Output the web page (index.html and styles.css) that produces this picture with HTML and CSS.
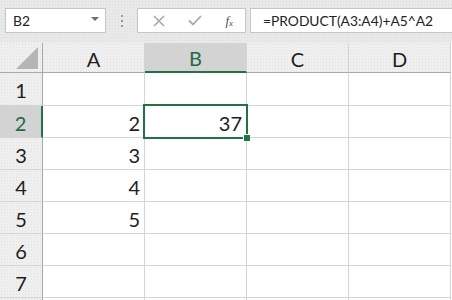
FILE: index.html
```html
<!DOCTYPE html>
<html lang="en">
<head>
    <meta charset="UTF-8">
    <title>Sheet</title>
    <link rel="stylesheet" href="styles.css">
</head>
<body>
    <div class="toolbar">
        <div class="name-box">
            <span>B2</span>
            <svg class="drop" width="8" height="5" viewBox="0 0 8 5"><path d="M0 0H8L4 4Z" fill="#6d6d6d"/></svg>
        </div>
        <div class="grip"><i></i><i></i><i></i></div>
        <div class="fx-buttons">
            <svg width="12" height="12" viewBox="0 0 12 12"><path d="M1 1L11 11M11 1L1 11" stroke="#a9a9a9" stroke-width="1.6"/></svg>
            <svg width="14" height="11" viewBox="0 0 14 11"><path d="M1 5.5L5 9.5L13 1" stroke="#a9a9a9" stroke-width="1.8" fill="none"/></svg>
            <span class="fx">f<sub>x</sub></span>
        </div>
        <div class="formula">=PRODUCT(A3:A4)+A5^A2</div>
    </div>

    <div class="sheet">
        <div class="hdr corner">
            <svg width="23" height="23" viewBox="0 0 23 23"><path d="M22 0V22H0Z" fill="#b5b5b5"/></svg>
        </div>
        <div class="hdr col">A</div>
        <div class="hdr col active-col">B</div>
        <div class="hdr col">C</div>
        <div class="hdr col">D</div>

        <div class="hdr row">1</div>
        <div class="cell"></div><div class="cell"></div><div class="cell"></div><div class="cell"></div>

        <div class="hdr row active-row">2</div>
        <div class="cell">2</div><div class="cell">37</div><div class="cell"></div><div class="cell"></div>

        <div class="hdr row">3</div>
        <div class="cell">3</div><div class="cell"></div><div class="cell"></div><div class="cell"></div>

        <div class="hdr row">4</div>
        <div class="cell">4</div><div class="cell"></div><div class="cell"></div><div class="cell"></div>

        <div class="hdr row">5</div>
        <div class="cell">5</div><div class="cell"></div><div class="cell"></div><div class="cell"></div>

        <div class="hdr row">6</div>
        <div class="cell"></div><div class="cell"></div><div class="cell"></div><div class="cell"></div>

        <div class="hdr row">7</div>
        <div class="cell"></div><div class="cell"></div><div class="cell"></div><div class="cell"></div>

        <!-- row 8 is only a sliver at the bottom edge -->
        <div class="hdr row"></div>
        <div class="cell"></div><div class="cell"></div><div class="cell"></div><div class="cell"></div>

        <div class="selection"><span class="handle"></span></div>
    </div>
</body>
</html>
```

FILE: styles.css
```css
body {
    margin: 0;
    width: 452px;
    height: 300px;
    overflow: hidden;
    background: #fff;
    font-family: Lato, "Liberation Sans", sans-serif;
    color: #1e1e1e;
}

.toolbar {
    height: 43px;
    display: flex;
    align-items: flex-start;
    padding-top: 8px;
    box-sizing: border-box;
    background-color: #e9e9e9;
    background-image: radial-gradient(#dcdcdc 0.6px, transparent 0.8px);
    background-size: 3px 3px;
}
.name-box {
    margin-left: 5px;
    width: 101px;
    height: 25px;
    box-sizing: border-box;
    border: 1px solid #c6c6c6;
    background: #fff;
    display: flex;
    align-items: center;
    justify-content: space-between;
    padding: 0 6px 0 7px;
    font-size: 13.8px;
    color: #222;
}
.drop {
    margin-top: -2px;
}
.grip {
    width: 31px;
    height: 25px;
    display: flex;
    flex-direction: column;
    align-items: center;
    justify-content: center;
    gap: 3px;
}
.grip i {
    width: 2px;
    height: 2px;
    background: #9a9a9a;
}
.fx-buttons {
    width: 109px;
    height: 25px;
    box-sizing: border-box;
    border: 1px solid #c6c6c6;
    background: #fff;
    display: flex;
    align-items: center;
    justify-content: space-between;
    padding: 0 12px 0 15px;
}
.fx {
    font-family: "Liberation Serif", serif;
    font-style: italic;
    font-size: 13px;
    color: #505050;
}
.fx sub {
    font-size: 9px;
    vertical-align: -1px;
}
.formula {
    margin-left: 4px;
    flex: 1;
    height: 25px;
    box-sizing: border-box;
    border: 1px solid #c6c6c6;
    border-right: none;
    background: #fff;
    padding-left: 12px;
    font-size: 13.8px;
    line-height: 23px;
    color: #222;
}

.sheet {
    position: relative;
    display: grid;
    grid-template-columns: 43px 102px 102px 102px 102px;
    grid-template-rows: 30px 33px repeat(7, 32px);
    font-size: 20px;
}
.hdr {
    background-color: #efefef;
    background-image: radial-gradient(#e2e2e2 0.6px, transparent 0.8px);
    background-size: 3px 3px;
    box-sizing: border-box;
    display: flex;
    align-items: center;
    justify-content: center;
    color: #1e1e1e;
}
.corner {
    border-right: 1px solid #a8a8a8;
    border-bottom: 1px solid #a8a8a8;
    align-items: flex-end;
    justify-content: flex-end;
    padding: 0 3px 2px 0;
}
.col {
    border-right: 1px solid #d4d4d4;
    border-bottom: 1px solid #a8a8a8;
    padding-top: 2px;
}
.row {
    border-right: 1px solid #a8a8a8;
    border-bottom: 1px solid #d4d4d4;
    padding-top: 2px;
}
.active-col {
    background-color: #d3d3d3;
    background-image: none;
    color: #1e6b40;
    border-bottom: 2px solid #217346;
}
.active-row {
    background-color: #d3d3d3;
    background-image: none;
    color: #1e6b40;
    border-right: 2px solid #217346;
}
.cell {
    border-right: 1px solid #d4d4d4;
    border-bottom: 1px solid #d4d4d4;
    box-sizing: border-box;
    display: flex;
    align-items: center;
    justify-content: flex-end;
    padding: 2px 4px 0 0;
}

.selection {
    position: absolute;
    left: 143px;
    top: 61px;
    width: 105px;
    height: 35px;
    box-sizing: border-box;
    border: 2px solid #217346;
    pointer-events: none;
}
.handle {
    position: absolute;
    right: -4px;
    bottom: -4px;
    width: 6px;
    height: 6px;
    background: #217346;
    border: 1px solid #fff;
    border-right: none;
    border-bottom: none;
}
```
